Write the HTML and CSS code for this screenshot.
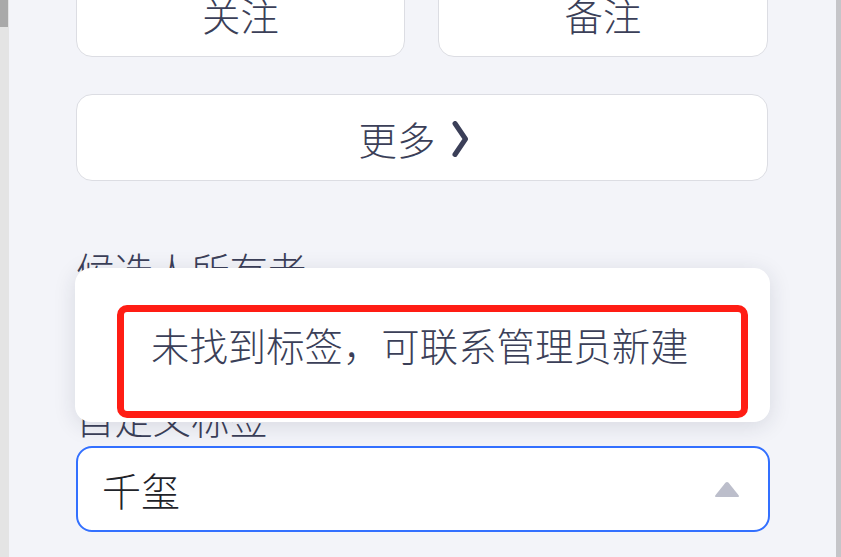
FILE: index.html
```html
<!DOCTYPE html>
<html lang="zh">
<head>
<meta charset="utf-8">
<link rel="stylesheet" href="styles.css">
</head>
<body>
<div class="frame">
  <div class="edge-left"><div class="scroll-thumb"></div></div>
  <main class="content">
    <div class="btn-row">
      <button class="btn">关注</button>
      <button class="btn">备注</button>
    </div>
    <button class="btn btn-more">更多<svg class="chev" width="18" height="36" viewBox="0 0 18 36"><path d="M4 2.5 L14.5 18 L4 33.5" fill="none" stroke="#3b3f58" stroke-width="5" stroke-linecap="round" stroke-linejoin="round"/></svg></button>

    <div class="form">
      <div class="label label-first">候选人所有者</div>
      <div class="field"></div>
      <div class="label">自定义标签</div>
      <div class="select">
        <span class="value">千玺</span>
        <svg class="caret" width="26" height="17" viewBox="0 0 26 17"><path d="M11.4 1.8 Q13 0 14.6 1.8 L24.6 14.2 Q25.6 16 23.6 16 L2.4 16 Q0.4 16 1.4 14.2 Z" fill="#bcbecb"/></svg>
      </div>

      <div class="popup">
        <div class="highlight">
          <div class="empty">未找到标签，可联系管理员新建</div>
        </div>
      </div>
    </div>
  </main>
  <div class="edge-right"></div>
</div>
</body>
</html>
```
FILE: styles.css
```css
* { box-sizing: border-box; }
html, body { margin: 0; padding: 0; }
body {
  width: 841px;
  height: 557px;
  overflow: hidden;
  background: #f3f4f9;
  font-family: "Noto Sans CJK SC", "Noto Sans", sans-serif;
  font-weight: 300;
  color: #3b3f58;
}
.frame {
  display: flex;
  height: 557px;
}
.edge-left {
  width: 9px;
  flex: none;
  background: #e4e4e4;
}
.scroll-thumb {
  width: 8px;
  height: 27px;
  background: #a9a9a9;
}
.edge-right {
  width: 6px;
  flex: none;
  background: #c5c5c9;
}
.content {
  flex: 1;
  padding: 0 66px 0 67px;
  position: relative;
}
.btn {
  font-family: inherit;
  font-weight: 300;
  font-size: 38.4px;
  line-height: 38px;
  color: #3b3f58;
  background: #ffffff;
  border: 1.5px solid #dcdde3;
  border-radius: 16px;
  height: 87px;
  padding: 0;
  display: flex;
  align-items: center;
  justify-content: center;
}
.btn-row {
  display: grid;
  grid-template-columns: 329px 330px;
  column-gap: 33px;
  margin-top: -30px;
}
.btn-more {
  width: 692px;
  margin-top: 37px;
  padding-right: 16px;
}
.chev {
  margin-left: 16px;
  margin-top: 2px;
}
.form {
  position: relative;
  margin-top: 69px;
}
.label {
  font-size: 38.4px;
  line-height: 38px;
  height: 38px;
  color: #3b3f58;
}
.field {
  height: 86px;
  margin: 12px 0;
}
.select {
  margin-top: 10px;
  height: 86px;
  width: 694px;
  background: #ffffff;
  border: 2px solid #3370ff;
  border-radius: 16px;
  display: flex;
  align-items: center;
  justify-content: space-between;
  padding: 0 28px 0 24px;
}
.value {
  font-size: 39px;
  line-height: 38px;
  color: #1f2329;
}
.caret {
  display: block;
}
.popup {
  position: absolute;
  left: -1px;
  top: 18px;
  width: 695px;
  height: 154px;
  background: #ffffff;
  border-radius: 16px;
  box-shadow: 0 4px 22px rgba(30, 35, 60, 0.13);
  padding: 37px 22px 0 42px;
}
.highlight {
  width: 631px;
  height: 113px;
  border: 7px solid #ff1d14;
  border-radius: 10px;
  padding: 13px 0 0 27px;
}
.empty {
  font-size: 38.4px;
  line-height: 38px;
  color: #3b3f58;
  white-space: nowrap;
}
```
